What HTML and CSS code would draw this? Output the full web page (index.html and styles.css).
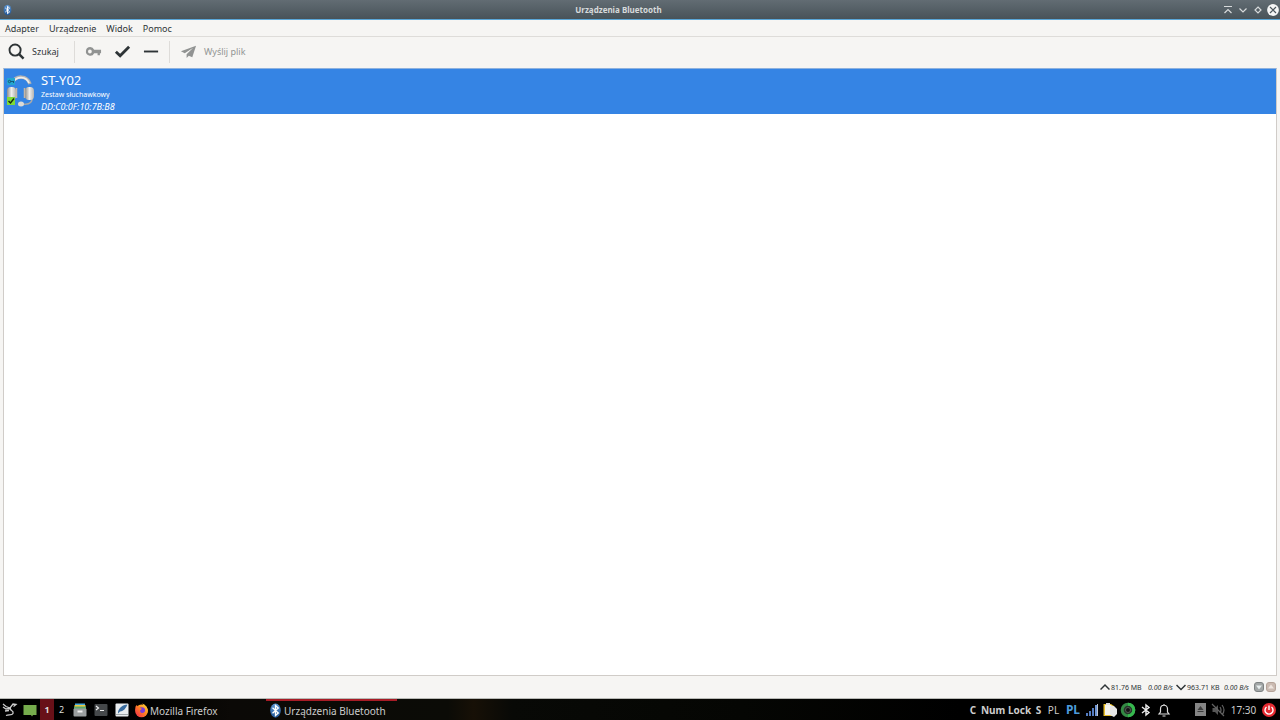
FILE: index.html
```html
<!DOCTYPE html>
<html lang="pl">
<head>
<meta charset="utf-8">
<meta name="viewport" content="width=device-width, initial-scale=1">
<title>Urządzenia Bluetooth</title>
<link rel="stylesheet" href="styles.css">
</head>
<body>
<svg width="0" height="0" class="defs" aria-hidden="true">
  <defs>
    <linearGradient id="blue" x1="0" y1="0" x2="0" y2="1"><stop offset="0" stop-color="#5b95d3"/><stop offset="1" stop-color="#1f5596"/></linearGradient>
    <linearGradient id="cup" x1="0" y1="0" x2="1" y2="0"><stop offset="0" stop-color="#8d8d8c"/><stop offset=".5" stop-color="#efeeec"/><stop offset="1" stop-color="#b5b4b2"/></linearGradient>
    <linearGradient id="fire" x1="1" y1="0" x2="0" y2="1"><stop offset="0" stop-color="#ffe23e"/><stop offset=".45" stop-color="#ff8a22"/><stop offset="1" stop-color="#f5234e"/></linearGradient>
    <symbol id="bt" viewBox="0 0 16 16"><ellipse cx="8" cy="8" rx="5.6" ry="7.6" fill="url(#blue)"/><path d="M4.8 5 11 10.7 8 13.4V2.6L11 5.3 4.8 11" fill="none" stroke="#fff" stroke-width="1.4"/></symbol>
  </defs>
</svg>
<main class="window">
  <header class="titlebar">
    <svg class="app-icon" viewBox="0 0 16 16"><use href="#bt"/></svg>
    <h1 class="title">Urządzenia Bluetooth</h1>
    <div class="controls">
      <button class="control" aria-label="Zwiń"><svg viewBox="0 0 12 12"><path d="M2 2.5h8M2.5 9 6 5.5 9.5 9"/></svg></button>
      <button class="control" aria-label="Minimalizuj"><svg viewBox="0 0 12 12"><path d="M2.5 4.5 6 8l3.500-3.500"/></svg></button>
      <button class="control" aria-label="Maksymalizuj"><svg viewBox="0 0 12 12"><path d="M6 3l3 3-3 3-3-3z"/></svg></button>
      <button class="control close" aria-label="Zamknij"><svg viewBox="0 0 12 12"><circle cx="6" cy="6" r="5.900"/><path d="M3 3l6 6M9 3 3 9"/></svg></button>
    </div>
  </header>
  <nav class="menubar">
    <button class="menu">Adapter</button>
    <button class="menu">Urządzenie</button>
    <button class="menu">Widok</button>
    <button class="menu">Pomoc</button>
  </nav>
  <div class="toolbar" role="toolbar">
    <button class="tool"><svg class="tool-icon" viewBox="0 0 18 18"><circle cx="7.500" cy="7.500" r="5.900" fill="none" stroke="#2e3436" stroke-width="2"/><path d="M11.700 11.700 16.500 16.500" stroke="#2e3436" stroke-width="2.600"/></svg><span>Szukaj</span></button>
    <span class="separator"></span>
    <button class="tool icon-only" disabled aria-label="Sparuj"><svg class="tool-icon" viewBox="0 0 18 18"><path fill="#919392" fill-rule="evenodd" d="M5.500 4.300a4.600 4.600 0 0 1 4.200 2.900H17v3.700h-1.200v2h-2.500v-2H9.700A4.600 4.600 0 1 1 5.500 4.300zM5.200 7a2 2 0 1 0 0 4 2 2 0 0 0 0-4z"/></svg></button>
    <button class="tool icon-only" aria-label="Zaufaj"><svg class="tool-icon" viewBox="0 0 18 18"><path fill="none" stroke="#2e3436" stroke-width="3" d="M2 9.300 6.500 13.500 16 4"/></svg></button>
    <button class="tool icon-only" aria-label="Usuń"><svg class="tool-icon" viewBox="0 0 18 18"><path stroke="#2e3436" stroke-width="2" d="M1 9h15"/></svg></button>
    <span class="separator second"></span>
    <button class="tool send" disabled><svg class="tool-icon" viewBox="0 0 18 18"><path fill="#919392" d="M17 3 1 8.800l4 2.100L14 5 7 12v4l2.300-2.500L13 15z"/></svg><span>Wyślij plik</span></button>
  </div>
  <section class="devices">
    <article class="device">
      <svg class="headset" viewBox="0 0 30 34">
        <path d="M6 8C10 0 21 0 24 9" fill="none" stroke="#b3b3b3" stroke-width="3.500"/>
        <path d="M7 7C11 1 20 1 23 8" fill="none" stroke="#eeeeec" stroke-width="1.800"/>
        <path d="M26 20c1 7-2 10-9 9" fill="none" stroke="#a9a9a8" stroke-width="1.500"/>
        <rect x="1" y="12" width="9" height="13" rx="4" fill="url(#cup)"/>
        <rect x="19" y="12" width="9" height="13" rx="4" fill="url(#cup)"/>
        <path d="M10.500 13v10M18.500 13v10" stroke="#c4b6a8" stroke-width="1.500"/>
        <ellipse cx="15" cy="29" rx="3" ry="2.500" fill="#dbdad7"/>
        <path d="M1 3h8v7H1z" fill="#25a5cf"/><path d="M4.500 6.500H8M7.500 6.500V8" fill="none" stroke="#124b66" stroke-width=".8"/><circle cx="3.500" cy="6.500" r="1.200" fill="none" stroke="#124b66" stroke-width=".8"/>
        <rect x="1" y="22" width="8" height="8" fill="#7edb35"/><path d="M2.500 26 4.500 28 8 23.500" fill="none" stroke="#172d10" stroke-width="1.400"/>
      </svg>
      <div>
        <h2 class="device-name">ST-Y02</h2>
        <p class="device-type">Zestaw słuchawkowy</p>
        <p class="device-address">DD:C0:0F:10:7B:B8</p>
      </div>
    </article>
  </section>
  <footer class="status">
    <svg class="arrow" viewBox="0 0 10 10"><path d="M.5 7.500 5 3l4.500 4.500"/></svg>
    <span class="total">81.76 MB</span><em class="rate">0.00 B/s</em>
    <svg class="arrow" viewBox="0 0 10 10"><path d="M.5 3 5 7.500 9.500 3"/></svg>
    <span class="total">963.71 KB</span><em class="rate">0.00 B/s</em>
    <svg class="state first" viewBox="0 0 10 10"><rect x=".5" y=".5" width="9" height="9" rx="2.500" fill="#a2a6a6" stroke="#7d8282"/><path d="M2 3.500h6L5 7.500z" fill="#e7eeee"/></svg>
    <svg class="state" viewBox="0 0 10 10"><rect x=".5" y=".5" width="9" height="9" rx="2.500" fill="#cbbbb2" stroke="#b5a399"/><path d="M2 6.500h6L5 2.500z" fill="#eee5df"/></svg>
  </footer>
</main>
<footer class="taskbar">
  <button class="launcher" aria-label="Menu"><svg viewBox="0 0 16 16"><path d="M1 2l3 2.500L8 6l3-4 3 .5-2.500 2M1 5l3 2 4-.5M3 9l4-.5M8.500 5.500c-2 3 4 3 2.500 6-1 2-4 1-7 2" fill="none" stroke="#ccc" stroke-width="1.300"/></svg></button>
  <button class="launcher desktop" aria-label="Pokaż pulpit"><svg viewBox="0 0 16 16"><path d="M1.500 3h13v10H11l-1 1.500L9 13H1.500z" fill="#76ad4d"/></svg></button>
  <button class="workspace active">1</button>
  <button class="workspace">2</button>
  <button class="launcher" aria-label="Pliki"><svg viewBox="0 0 16 16"><path d="M3 1.500h10V4H3z" fill="#44a8df"/><path d="M2.500 3h11v2h-11z" fill="#eac943"/><path d="M2 4.500h12V7H2z" fill="#5ba66d"/><rect x="1.500" y="6.500" width="13" height="8" rx="1" fill="#9a9e9f"/><rect x="5.500" y="8.500" width="5" height="2" fill="#eee"/></svg></button>
  <button class="launcher" aria-label="Terminal"><svg viewBox="0 0 16 16"><rect x="1.500" y="2" width="13" height="12" rx="1" fill="#45484a"/><path d="m3 4 2.500 2L3 8M7 8.500h4" fill="none" stroke="#eee" stroke-width="1.200"/></svg></button>
  <button class="launcher" aria-label="Edytor"><svg viewBox="0 0 16 16"><rect x="1.500" y="1.500" width="13" height="13" rx="1" fill="#e9edef"/><path d="M4 10C5 6 8 3 13.500 2.500 12 6 10 9 6 9.500l-2 2z" fill="#386b9e"/><path d="M2 12.500h12" stroke="#a1a7aa"/></svg></button>
  <button class="task firefox"><svg viewBox="0 0 16 16"><circle cx="8" cy="8.500" r="6.800" fill="url(#fire)"/><circle cx="8.300" cy="8" r="3.600" fill="#793bd7"/><path d="M1.500 4 3 2l1.500 2.500 4 1.500-2 2C6 11 11 12 12 8c1.500-2-1-5-3.500-7.500C14 2 16 8 13.500 12 9 17 1 14 1.500 4z" fill="url(#fire)"/></svg><span>Mozilla Firefox</span></button>
  <button class="task current"><svg viewBox="0 0 16 16"><use href="#bt"/></svg><span>Urządzenia Bluetooth</span></button>
  <div class="tray">
    <b class="cell caps">C</b><b class="cell num">Num Lock</b><b class="cell scroll">S</b>
    <span class="cell layout">PL</span><b class="cell layout-blue">PL</b>
    <svg class="icon" viewBox="0 0 16 16"><path d="M3 11v3M6 9v5M9 6v8" stroke="#547cc0" stroke-width="2"/><path d="M12 3v11" stroke="#6d94d4" stroke-width="2"/><path d="M13.500 2v12" stroke="#bcc5d0"/></svg>
    <svg class="icon" viewBox="0 0 16 16"><path d="M1.500 2H9l3 2v10H1.500z" fill="#e6be2b"/><path d="M3 3h6l3 3v7H3z" fill="#f4f3eb"/><path d="M8 4h4l3 3v5l-3 3-4-2z" fill="#e5e5e5"/><rect x="4" y="1" width="4" height="2" fill="#ddd"/></svg>
    <svg class="icon" viewBox="0 0 16 16"><circle cx="8" cy="8" r="5.800" fill="#263329" stroke="#348944" stroke-width="3"/><path d="M8 2.200A5.800 5.800 0 0 1 8 13.800" fill="none" stroke="#36b84e" stroke-width="3"/><circle cx="8" cy="8" r="2.500" fill="#111" stroke="#535b55"/></svg>
    <svg class="icon" viewBox="0 0 16 16"><path d="m4 5 7 5.500L8 13V3l3 2.500L4 11" fill="none" stroke="#eee" stroke-width="1.400"/></svg>
    <svg class="icon bell" viewBox="0 0 16 16"><path d="M3 12h10l-1.500-2V7c0-5-7-5-7 0v3zM8 3.500V2M6.500 14h3" fill="none" stroke="#ddd" stroke-width="1.200"/></svg>
    <svg class="icon" viewBox="0 0 16 16"><rect x="3" y="1" width="11" height="13" fill="#858585"/><path d="M5.500 8h6l-3-4zM5.500 9h6v1h-6z" fill="#3c3c3c"/></svg>
    <svg class="icon" viewBox="0 0 16 16"><path d="M2.500 6H5l3-3v10l-3-3H2.500z" fill="#555"/><path d="M10 5q2 3 0 6M12 3q4 5 0 10M2 2l12 12" fill="none" stroke="#626262" stroke-width="1.200"/></svg>
    <time class="cell clock">17:30</time>
    <button class="power" aria-label="Wyłącz"><svg class="icon" viewBox="0 0 16 16"><circle cx="8" cy="8" r="7" fill="#e52b32"/><path d="M8 3.500V8M5.500 5a4 4 0 1 0 5 0" fill="none" stroke="#fff" stroke-width="1.400"/></svg></button>
  </div>
</footer>
</body>
</html>
```
FILE: styles.css
```css
* { box-sizing: border-box; }
body { margin: 0; min-height: 100vh; display: flex; flex-direction: column; background: #000; color: #2e3436; font: 10px/14px "Noto Sans", sans-serif; }
.defs { position: absolute; }
button { margin: 0; padding: 0; border: 0; background: none; color: inherit; font: inherit; white-space: nowrap; }
svg { flex: none; }
h1, h2, p { margin: 0; }
.window { flex: 1; display: flex; flex-direction: column; background: #f6f5f3; border-bottom: 1px solid #b8b9b5; }
.titlebar { display: flex; align-items: center; height: 20px; background: linear-gradient(#626c73, #485359); border-bottom: 1px solid #5ba8d9; padding: 0 1px 0 2px; }
.app-icon { width: 11px; height: 12px; }
.title { flex: 1; padding-left: 2px; text-align: center; color: #d7dadb; font-size: 8px; line-height: 14px; }
.controls { display: flex; gap: 3px; }
.control { display: flex; width: 12px; height: 12px; }
.control svg { width: 12px; height: 12px; fill: none; stroke: #d7dadb; stroke-width: 1.2; }
.close circle { fill: #f5f6f6; stroke: none; }
.close path { stroke: #4d575d; }
.menubar { display: flex; gap: 10px; height: 17px; padding: 2px 5px 0; border-bottom: 1px solid #dedcd9; font-size: 9px; line-height: 14px; }
.menu { height: 14px; }
.toolbar { display: flex; align-items: center; height: 29px; padding: 0 8px; font-size: 9px; }
.tool { display: flex; align-items: center; gap: 7px; }
.tool:disabled { color: #929594; }
.tool-icon { width: 17px; height: 17px; }
.icon-only { margin-right: 12px; }
.separator { width: 1px; height: 22px; margin: 0 10px 0 15px; background: #dedcd9; }
.separator.second { margin: 0 10px 0 -3px; }
.devices { flex: 1; margin: 2px 3px 0; border: 1px solid #d0ccc8; border-top-color: #8db1de; background: #fff; }
.device { display: flex; gap: 5px; height: 45px; padding: 3px 2px; background: #3584e4; color: #fff; }
.headset { width: 30px; height: 34px; margin-top: 3px; }
.device-name { font-size: 13px; font-weight: 400; line-height: 16px; }
.device-type { font-size: 7px; line-height: 13px; }
.device-address { font-size: 9px; font-style: italic; line-height: 12px; }
.status { display: flex; align-items: center; justify-content: flex-end; height: 22px; padding-right: 4px; font-size: 7px; line-height: 15px; }
.arrow { width: 10px; height: 10px; margin: 0 1px; fill: none; stroke: #2e3436; stroke-width: 1.5; }
.total { min-width: 33px; }
.rate { min-width: 27px; margin-left: 4px; }
.state { width: 10px; height: 10px; margin-left: 2px; }
.state.first { margin-left: 3px; }
.taskbar { display: flex; height: 21px; background: linear-gradient(90deg, #000 0 10%, #0b0906 18%, #0b0b06 35%, #171006 37%, #080906 40%, #050603 58%, #000 75%); color: #ccc; font-size: 10px; }
.launcher { display: flex; align-items: center; justify-content: center; width: 20px; }
.launcher svg { width: 16px; height: 16px; }
.workspace { width: 14px; color: #ddd; font-size: 9px; }
.workspace.active { background: #681018; font-weight: 700; }
.workspace + .workspace { width: 15px; }
.workspace ~ .launcher { width: 21px; }
.task { display: flex; align-items: center; gap: 1px; width: 131px; padding-left: 2px; border-top: 2px solid transparent; }
.firefox { width: 134px; }
.task svg { width: 15px; height: 15px; }
.current { border-top-color: #a71c26; }
.tray { display: flex; align-items: center; margin-left: auto; padding-right: 2px; }
.cell { text-align: center; white-space: nowrap; }
.caps { width: 12px; }
.num { width: 54px; }
.scroll { width: 11px; }
.layout { width: 19px; }
.layout-blue { width: 20px; color: #4c9bdc; font-size: 12px; }
.icon { display: block; width: 16px; height: 16px; margin: 0 1px; }
.bell { margin-right: 19px; }
.clock { width: 33px; }
.power { display: flex; }
```
